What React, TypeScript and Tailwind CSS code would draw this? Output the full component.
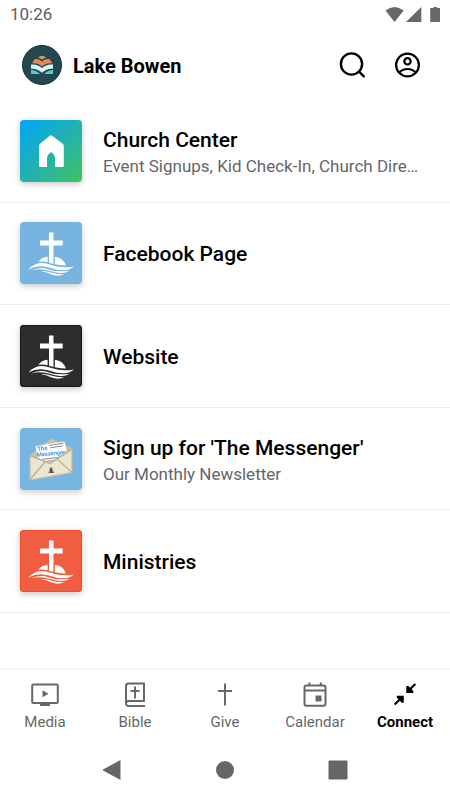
import type { ReactNode } from "react";

function CrossArt() {
  return (
    <svg viewBox="0 0 62 62" className="size-full" fill="#fff" aria-hidden="true">
      <path d="M29 10.500h4.500V18.500h9.200V23.500h-9.200V42L29 40.800V23.500H20V18.500h9z" />
      <path d="M18.500 39.800Q21.500 35.500 27.600 34.800V40.300Q23 39 18.500 39.800zM34.900 34.800Q43.500 36 46 43.600Q41 43.600 34.900 42.200z" />
      <path d="M8.500 47.500Q13.500 41.500 21 41Q26 41 31.500 43Q42 46.800 54 44.500Q50 48 44 48.300Q37 48.500 30 45.800Q18 42 8.500 47.500z" />
      <path d="M10.500 48.700Q19 44.200 29 47.400Q37 50.400 49.500 48.800Q45.500 51.500 40 51Q35 50.600 30.500 49Q20 45.800 10.500 48.700z" />
      <path d="M21 49.200Q26 48.600 31 50.600Q37 52.600 44.500 52.300Q38 55 31 52.300Q26 49.800 21 49.200z" />
    </svg>
  );
}

function HouseArt() {
  return (
    <svg viewBox="0 0 62 62" className="size-full" aria-hidden="true">
      <path
        fill="#fff"
        d="M29.800 15.700Q31 14.700 32.200 15.700L43 24Q43.800 24.800 43.800 26V46Q43.800 47 42.800 47H35V38Q34.800 34.500 31 32Q27.400 34.500 27 38V47H20Q19 47 19 46V26Q19 24.800 19.800 24z"
      />
    </svg>
  );
}

function EnvelopeArt() {
  return (
    <svg viewBox="0 0 62 62" className="size-full" aria-hidden="true">
      <path d="M10 27L31 10.500L52 20L31 40z" fill="#c9c0a8" />
      <path d="M15.500 18L44.500 13.500L47 25L31 36L18 31z" fill="#fff" />
      <g fill="#3d9bd3" fontFamily="Roboto, sans-serif" fontWeight="700" transform="rotate(-6 17 24)">
        <text x="17.500" y="23" fontSize="6">The</text>
        <text x="16.500" y="28.800" fontSize="5.700">Messenger</text>
      </g>
      <path d="M29 17.500l14.500-2.300M30 19.800l13-2M22 31.300l16-1.800M24 33.500l12-1.200" stroke="#6b6b6b" strokeWidth=".8" />
      <path d="M10 27L30 35.500L52 20V44.500L10 52z" fill="#ece5cf" stroke="#c5bca3" strokeWidth="1.200" />
      <path d="M10 51.500L25 34M52 44.500L37 31M10 27.500L30 35.500L52 21" fill="none" stroke="#bdb49b" strokeWidth="1.500" />
      <path d="M31 39.500v4.500M29.500 41h3M28.500 44.300h5.500M29.500 42.800h3.500" stroke="#333" strokeWidth="1.100" />
    </svg>
  );
}

function WaveLogo() {
  return (
    <svg viewBox="0 0 40 40" className="size-10 shrink-0" aria-hidden="true">
      <circle cx="20" cy="20" r="19.500" fill="#24464f" stroke="#173239" />
      <path d="M16 12.400Q20 9.600 24 12.400Q21.800 12.800 20 14.600Q18.200 12.800 16 12.400z" fill="#e5a34a" />
      <path d="M12.800 14Q17 13.600 20 16.400Q23 13.600 27.200 14Q29.600 16 30.200 18.400Q24.500 17.200 20 21.400Q15.500 17.200 10.300 18.400Q10.800 16 12.800 14z" fill="#ef8353" />
      <path d="M9 19.600Q15.500 18.800 20 23Q24.500 18.800 31 19.600V23.700Q25 23.200 20 27.800Q15 23.200 9 23.700z" fill="#d8f4f3" />
      <path d="M9 25Q14 25 18 29H9zM31 25Q26 25 22 29H31z" fill="#5accc6" />
    </svg>
  );
}

const links: { title: string; note?: string; tile: string; art: ReactNode }[] = [
  {
    title: "Church Center",
    note: "Event Signups, Kid Check-In, Church Dire…",
    tile: "bg-linear-to-br from-[#05a5fb] via-[#22b1ae] to-[#42c25b]",
    art: <HouseArt />,
  },
  { title: "Facebook Page", tile: "bg-[#77b4df]", art: <CrossArt /> },
  { title: "Website", tile: "bg-[#2d2d2d] ring-1 ring-inset ring-[#151515]", art: <CrossArt /> },
  { title: "Sign up for 'The Messenger'", note: "Our Monthly Newsletter", tile: "bg-[#77b5e2]", art: <EnvelopeArt /> },
  { title: "Ministries", tile: "bg-[#f15d40] ring-1 ring-inset ring-[#f74a2c]", art: <CrossArt /> },
];

const tabs: { label: string; icon: ReactNode }[] = [
  {
    label: "Media",
    icon: (
      <>
        <rect x="1.200" y="4.500" width="25.600" height="18.500" rx="1" fill="none" stroke="currentColor" strokeWidth="2" />
        <path d="M11.500 10.300v7l6-3.500zM9 22.500h10V26H9z" />
      </>
    ),
  },
  {
    label: "Bible",
    icon: (
      <path
        fill="none"
        stroke="currentColor"
        strokeWidth="2"
        d="M24 21H7.500a2.500 2.500 0 0 0 0 5H24M5 23.500V6Q5 3.500 7.500 3.500H23V21M14 6.500v12M9.500 11h9"
      />
    ),
  },
  {
    label: "Give",
    icon: <path fill="none" stroke="currentColor" strokeWidth="2" d="M14 3.500v22M7 11h14" />,
  },
  {
    label: "Calendar",
    icon: (
      <>
        <path
          fill="none"
          stroke="currentColor"
          strokeWidth="2"
          d="M5.500 5.500h17q2 0 2 2v16.300q0 2-2 2h-17q-2 0-2-2V7.500q0-2 2-2zM3.500 10.500h21M8.500 2.500v3M19.800 2.500v3"
        />
        <path d="M14.500 15.500h6v6h-6z" />
      </>
    ),
  },
  {
    label: "Connect",
    icon: (
      <>
        <path fill="none" stroke="currentColor" strokeWidth="2.200" d="M24.300 4L17 11.300M3.700 24.500L11 17.200" />
        <path d="M15.300 6h2l5 5v2h-7zM12.800 22.800h-2l-5-5v-2h7z" />
      </>
    ),
  },
];

export default function App() {
  return (
    <div className="flex min-h-screen flex-col bg-white font-['Roboto',sans-serif] text-black">
      <div className="flex h-[30px] items-center justify-between pr-2 pl-[10px] text-[#606060]">
        <span className="text-[17px]">10:26</span>
        <svg viewBox="0 0 60 20" className="h-5 w-[60px]" fill="#686868" aria-hidden="true">
          <path d="M3.500 5.500Q12.500-1.500 21.700 5.500L12.500 17z" />
          <path d="M39.300 2v15H24z" />
          <path d="M49 3h2.500V2H55v1h2.200q.8 0 .8.800v12.400q0 .8-.8.800H49q-.8 0-.8-.8V3.800q0-.8.800-.8z" />
        </svg>
      </div>

      <header className="flex h-[70px] items-center px-[22px]">
        <WaveLogo />
        <h1 className="ml-[11px] flex-1 pt-0.5 text-xl font-bold">Lake Bowen</h1>
        <div className="flex gap-[25px] pr-1.5">
          <button type="button" aria-label="Search">
            <svg viewBox="0 0 30 30" className="size-[30px]" fill="none" stroke="#000" strokeWidth="2.400" strokeLinecap="round" aria-hidden="true">
              <circle cx="14.500" cy="14" r="10.600" />
              <path d="M22.300 21.800l4.500 4.500" />
            </svg>
          </button>
          <button type="button" aria-label="Account">
            <svg viewBox="0 0 30 30" className="size-[30px]" fill="none" stroke="#000" strokeWidth="2.200" aria-hidden="true">
              <circle cx="15.500" cy="15" r="11.400" />
              <circle cx="15.500" cy="11.300" r="3.200" />
              <path d="M7.300 22.500Q10.500 19 15.500 19T23.700 22.500" />
            </svg>
          </button>
        </div>
      </header>

      <main className="flex-1">
        <ul className="grid min-h-[513px] auto-rows-fr grid-cols-1">
          {links.map((link) => (
            <li key={link.title} className="border-b border-[#ebebeb]">
              <a href="#" className="flex h-full items-center gap-[21px] pr-6 pl-5">
                <span className={`size-[62px] shrink-0 overflow-hidden rounded-sm drop-shadow-[0_2px_3px_rgba(0,0,0,0.22)] ${link.tile}`}>
                  {link.art}
                </span>
                <span className="min-w-0 flex-1 pt-0.5">
                  <span className="block truncate text-[21px] leading-7 font-medium">{link.title}</span>
                  {link.note && <span className="block truncate text-[17px] leading-6 text-[#65656a]">{link.note}</span>}
                </span>
              </a>
            </li>
          ))}
        </ul>
      </main>

      <nav className="grid h-[72px] grid-cols-5 border-t-2 border-[#f5f5f5]">
        {tabs.map((tab) => (
          <button
            key={tab.label}
            type="button"
            className="flex flex-col items-center gap-1 pt-[10px] text-[15px] leading-5 text-[#66666b] last:font-bold last:text-black"
          >
            <svg viewBox="0 0 28 28" className="size-7" fill="currentColor" aria-hidden="true">
              {tab.icon}
            </svg>
            {tab.label}
          </button>
        ))}
      </nav>

      <div className="grid h-[60px] grid-cols-3 items-center px-14 text-[#666]">
        <button type="button" aria-label="Back" className="justify-self-center">
          <svg viewBox="0 0 20 20" className="size-5" fill="currentColor" aria-hidden="true">
            <path d="M18.500 0v20L1 10.500V9.500z" />
          </svg>
        </button>
        <button type="button" aria-label="Home" className="justify-self-center">
          <svg viewBox="0 0 20 20" className="size-5" fill="currentColor" aria-hidden="true">
            <circle cx="10" cy="10" r="9" />
          </svg>
        </button>
        <button type="button" aria-label="Recent apps" className="justify-self-center">
          <svg viewBox="0 0 20 20" className="size-5" fill="currentColor" aria-hidden="true">
            <rect x=".5" y=".5" width="19" height="19" rx="1" />
          </svg>
        </button>
      </div>
    </div>
  );
}
